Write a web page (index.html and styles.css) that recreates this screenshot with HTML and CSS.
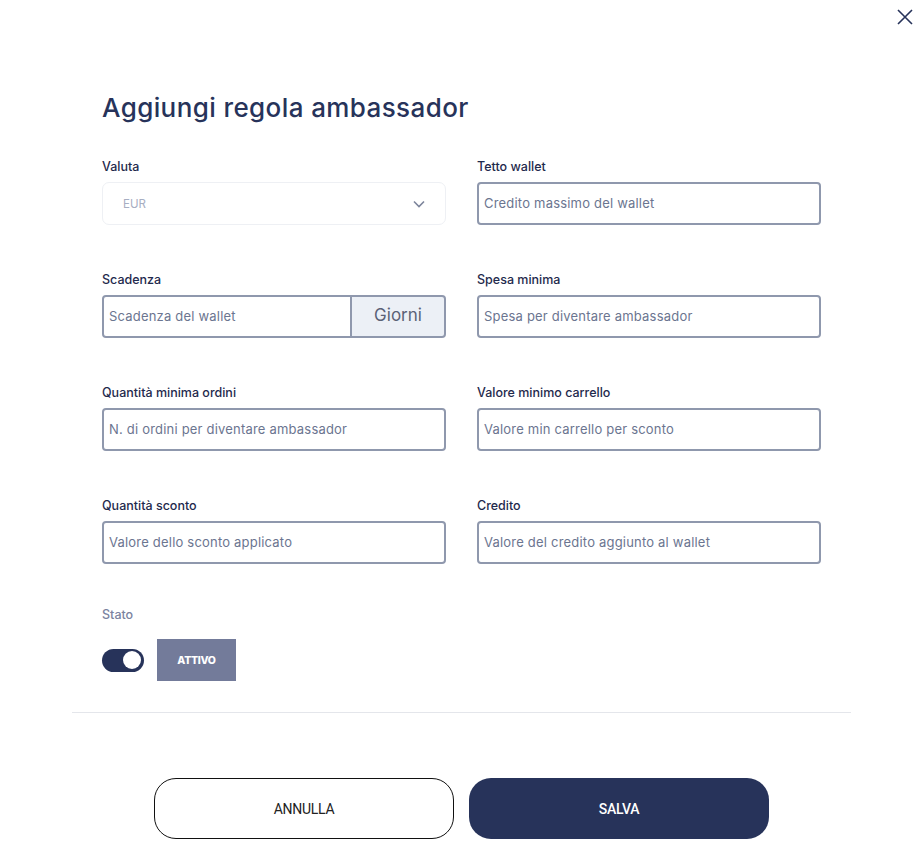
FILE: index.html
```html
<!DOCTYPE html>
<html lang="it">
<head>
<meta charset="utf-8">
<title>Aggiungi regola ambassador</title>
<link rel="stylesheet" href="styles.css">
</head>
<body>
<button class="close" aria-label="Chiudi">
  <svg width="16" height="16" viewBox="0 0 16 16"><path d="M1 1L15 15M15 1L1 15" stroke="#27335a" stroke-width="1.6" fill="none"/></svg>
</button>
<div class="modal">
  <div class="form">
    <h1 class="title">Aggiungi regola ambassador</h1>
    <div class="grid">
      <div class="field">
        <label class="label">Valuta</label>
        <div class="select">
          <span>EUR</span>
          <svg width="12" height="8" viewBox="0 0 12 8"><path d="M1 1.5L6 6.5L11 1.5" stroke="#7d859c" stroke-width="1.6" fill="none"/></svg>
        </div>
      </div>
      <div class="field">
        <label class="label">Tetto wallet</label>
        <div class="input">Credito massimo del wallet</div>
      </div>
      <div class="field">
        <label class="label">Scadenza</label>
        <div class="group">
          <div class="input grow">Scadenza del wallet</div>
          <div class="addon">Giorni</div>
        </div>
      </div>
      <div class="field">
        <label class="label">Spesa minima</label>
        <div class="input">Spesa per diventare ambassador</div>
      </div>
      <div class="field">
        <label class="label">Quantità minima ordini</label>
        <div class="input">N. di ordini per diventare ambassador</div>
      </div>
      <div class="field">
        <label class="label">Valore minimo carrello</label>
        <div class="input">Valore min carrello per sconto</div>
      </div>
      <div class="field">
        <label class="label">Quantità sconto</label>
        <div class="input">Valore dello sconto applicato</div>
      </div>
      <div class="field">
        <label class="label">Credito</label>
        <div class="input">Valore del credito aggiunto al wallet</div>
      </div>
    </div>
    <div class="status">
      <div class="label muted">Stato</div>
      <div class="status-row">
        <div class="toggle"><span class="knob"></span></div>
        <div class="badge">ATTIVO</div>
      </div>
    </div>
  </div>
  <hr class="divider">
  <div class="actions">
    <button class="btn btn-outline">ANNULLA</button>
    <button class="btn btn-primary">SALVA</button>
  </div>
</div>
</body>
</html>
```
FILE: styles.css
```css
* { box-sizing: border-box; }
body {
  margin: 0;
  background: #fff;
  font-family: Inter, "Noto Sans", sans-serif;
  color: #1f2a4d;
}
.close {
  position: absolute;
  top: 8px;
  right: 9px;
  width: 18px;
  height: 18px;
  padding: 0;
  border: 0;
  background: none;
  display: flex;
  align-items: center;
  justify-content: center;
}
.modal {
  width: 779px;
  margin: 0 auto;
  padding-top: 92px;
}
.form {
  padding: 0 30px;
}
.title {
  margin: 0 0 34px;
  font-size: 26px;
  line-height: 32px;
  font-weight: 500;
  color: #27335a;
  letter-spacing: 0.4px;
}
.grid {
  display: grid;
  grid-template-columns: 344px 344px;
  column-gap: 31px;
  row-gap: 46px;
}
.field {
  display: flex;
  flex-direction: column;
  gap: 7px;
}
.label {
  font-size: 12.5px;
  line-height: 17px;
  font-weight: 500;
  color: #1f2a4d;
}
.label.muted { color: #7b83a0; }
.select {
  height: 43px;
  border: 1px solid #eef0f4;
  border-radius: 7px;
  display: flex;
  align-items: center;
  justify-content: space-between;
  padding: 0 20px 0 20px;
  font-size: 11.5px;
  color: #a7aec2;
}
.input {
  height: 43px;
  border: 2px solid #8f98ad;
  border-radius: 4px;
  display: flex;
  align-items: center;
  padding: 0 5px 2px;
  font-size: 13px;
  letter-spacing: 0.2px;
  color: #6b7590;
}
.group { display: flex; }
.grow { flex: 1; border-radius: 4px 0 0 4px; }
.addon {
  width: 94px;
  height: 43px;
  border: 2px solid #8f98ad;
  border-left: 0;
  border-radius: 0 4px 4px 0;
  background: #ecf0f6;
  display: flex;
  align-items: center;
  justify-content: center;
  padding-bottom: 4px;
  font-size: 17px;
  color: #5b6277;
}
.status {
  margin-top: 42px;
  display: flex;
  flex-direction: column;
  gap: 16px;
}
.status-row {
  display: flex;
  align-items: center;
  gap: 13px;
}
.toggle {
  width: 42px;
  height: 23px;
  border-radius: 12px;
  background: #27335a;
  display: flex;
  align-items: center;
  justify-content: flex-end;
  padding: 0 3px;
}
.knob {
  width: 18px;
  height: 18px;
  border-radius: 50%;
  background: #fff;
}
.badge {
  width: 79px;
  height: 42px;
  background: #737b9a;
  color: #fff;
  font-size: 10.5px;
  font-weight: 800;
  display: flex;
  align-items: center;
  justify-content: center;
  letter-spacing: -0.3px;
}
.divider {
  margin: 31px 0 0;
  border: 0;
  border-top: 1px solid #e4e6eb;
}
.actions {
  margin-top: 65px;
  display: flex;
  justify-content: center;
  gap: 15px;
}
.btn {
  width: 300px;
  height: 61px;
  border-radius: 22px;
  font-family: Roboto, "Liberation Sans", sans-serif;
  font-size: 14px;
  letter-spacing: -0.3px;
}
.btn-outline {
  background: #fff;
  border: 1px solid #111;
  color: #222;
  font-weight: 400;
}
.btn-primary {
  background: #27335a;
  border: 0;
  color: #fff;
  font-weight: 500;
}
```
